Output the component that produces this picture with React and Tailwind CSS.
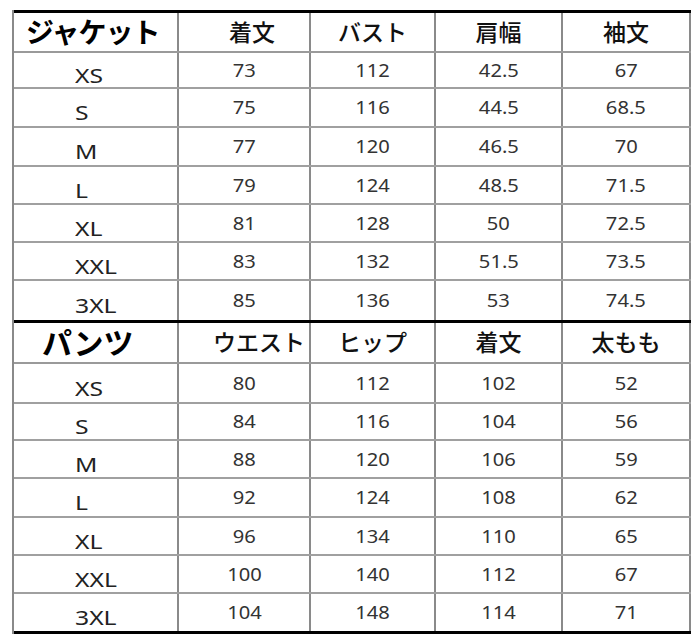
import React from "react";

const FONT = { fontFamily: '"Noto Sans", "Noto Sans CJK JP", sans-serif' };

const COLS = "grid grid-cols-[165px_132px_125px_127px_128px]";

const jacket = {
	title: "ジャケット",
	titleClass: "pl-[12px] text-[28px] tracking-[-1px]",
	headerClass: "h-[40px] border-b-2 border-[#9a9a9a]",
	heads: ["着文", "バスト", "肩幅", "袖文"],
	headPad: ["pl-[16px]", "", "", ""],
	rows: [
		{ h: "h-[36px]", size: "XS", v: ["73", "112", "42.5", "67"] },
		{ h: "h-[39px]", size: "S", v: ["75", "116", "44.5", "68.5"] },
		{ h: "h-[39px]", size: "M", v: ["77", "120", "46.5", "70"] },
		{ h: "h-[38px]", size: "L", v: ["79", "124", "48.5", "71.5"] },
		{ h: "h-[38px]", size: "XL", v: ["81", "128", "50", "72.5"] },
		{ h: "h-[38px]", size: "XXL", v: ["83", "132", "51.5", "73.5"] },
		{ h: "h-[42px]", size: "3XL", v: ["85", "136", "53", "74.5"], last: true },
	],
};

const pants = {
	title: "パンツ",
	titleClass: "pl-[28px] text-[30px]",
	headerClass: "h-[41px] border-b-2 border-[#9a9a9a]",
	heads: ["ウエスト", "ヒップ", "着文", "太もも"],
	headPad: ["pl-[30px]", "", "", ""],
	rows: [
		{ h: "h-[40px]", size: "XS", v: ["80", "112", "102", "52"] },
		{ h: "h-[37px]", size: "S", v: ["84", "116", "104", "56"] },
		{ h: "h-[38px]", size: "M", v: ["88", "120", "106", "59"] },
		{ h: "h-[39px]", size: "L", v: ["92", "124", "108", "62"] },
		{ h: "h-[38px]", size: "XL", v: ["96", "134", "110", "65"] },
		{ h: "h-[38px]", size: "XXL", v: ["100", "140", "112", "67"] },
		{ h: "h-[40px]", size: "3XL", v: ["104", "148", "114", "71"], last: true },
	],
};

const Cell = ({ className = "", children }) => (
	<div className={`flex items-center border-r-2 border-[#8a8a8a] ${className}`}>{children}</div>
);

const Section = ({ data }) => (
	<div>
		<div className={`${COLS} ${data.headerClass}`}>
			<Cell className={`font-bold text-black leading-none ${data.titleClass}`}>{data.title}</Cell>
			{data.heads.map((h, i) => (
				<Cell key={h + i} className={`justify-center text-[23px] font-medium text-[#111] leading-none ${data.headPad[i]}`}>
					{h}
				</Cell>
			))}
		</div>
		{data.rows.map((r) => (
			<div
				key={r.size}
				className={`${COLS} ${r.h} ${r.last ? "border-b-[3px] border-black" : "border-b-2 border-[#a0a0a0]"}`}
			>
				<Cell className="pl-[61px] pt-[12px] text-[19px] text-[#222] leading-none">
					<span className="inline-block origin-left scale-x-[1.3]">{r.size}</span>
				</Cell>
				{r.v.map((v, i) => (
					<Cell key={i} className="justify-center text-[18px] text-[#333] leading-none pb-[1px]">
						<span className="inline-block scale-x-[1.12]">{v}</span>
					</Cell>
				))}
			</div>
		))}
	</div>
);

export default function App() {
	return (
		<div className="w-[700px] h-[639px] bg-white pt-[10px] pl-[12px]" style={FONT}>
			<div className="w-[679px] border-l-2 border-[#8a8a8a]">
				<div className="border-t-[3px] border-black">
					<Section data={jacket} />
					<Section data={pants} />
				</div>
			</div>
		</div>
	);
}
